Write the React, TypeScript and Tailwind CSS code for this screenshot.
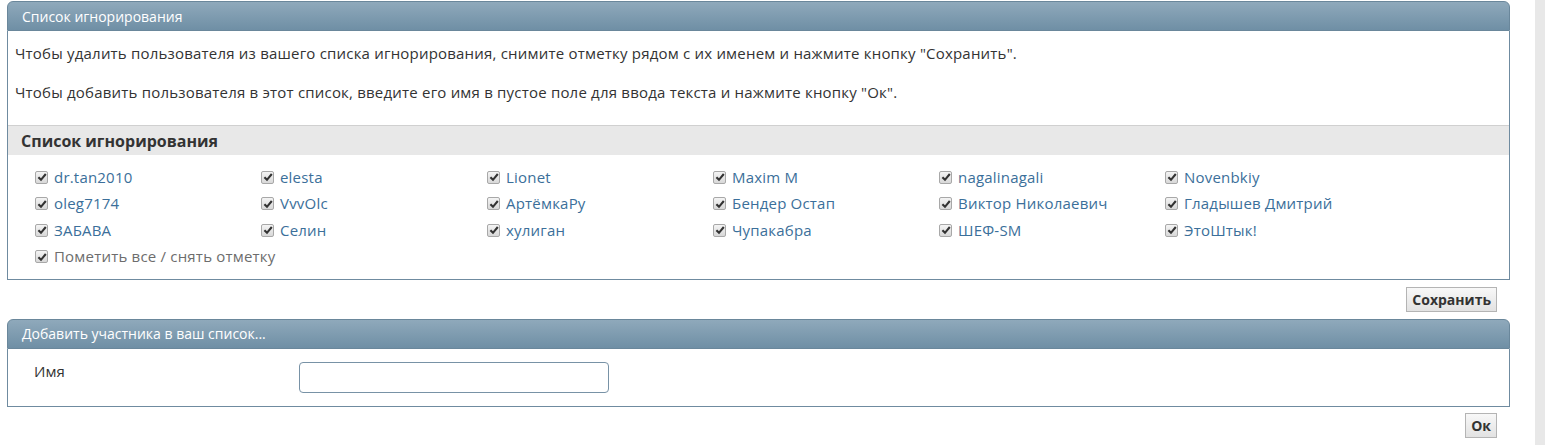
import React from 'react';

const ignored: string[] = [
  'dr.tan2010', 'elesta', 'Lionet', 'Maxim M', 'nagalinagali', 'Novenbkiy',
  'oleg7174', 'VvvOlc', 'АртёмкаРу', 'Бендер Остап', 'Виктор Николаевич', 'Гладышев Дмитрий',
  'ЗАБАВА', 'Селин', 'хулиган', 'Чупакабра', 'ШЕФ-SM', 'ЭтоШтык!',
];

function Check() {
  return (
    <span className="inline-flex w-[13px] h-[13px] shrink-0 items-center justify-center rounded-[2px] border border-[#a8a8a8] bg-gradient-to-b from-[#f4f4f4] to-[#d8d8d8]">
      <svg viewBox="0 0 10 10" className="w-[10px] h-[10px]">
        <path d="M1.4 5.2 L4 7.8 L8.8 2" fill="none" stroke="#333" strokeWidth="2.1" />
      </svg>
    </span>
  );
}

function PanelHead({ children }: { children: React.ReactNode }) {
  return (
    <div className="h-[30px] flex items-center px-[14px] rounded-t-[6px] border border-[#6a879b] bg-gradient-to-b from-[#8fa9bb] to-[#6f8fa5] text-white text-[14px]">
      {children}
    </div>
  );
}

function Button({ children }: { children: React.ReactNode }) {
  return (
    <button className="h-[25px] px-[5px] border border-[#b4b4b4] bg-gradient-to-b from-[#f8f8f8] to-[#e2e2e2] text-[14px] font-bold text-[#333]">
      {children}
    </button>
  );
}

export default function App() {
  return (
    <div className="flex w-[1545px] h-[445px] bg-white font-['Open_Sans',sans-serif] text-[#333]">
      <div className="w-[1528px] pl-[7px] pr-[18px]">
        {/* ignore list */}
        <section className="mt-[1px]">
          <PanelHead>Список игнорирования</PanelHead>
          <div className="border border-t-0 border-[#6f8ba0] text-[15px] tracking-[0.2px]">
            <div className="px-[7px] pt-[12px] pb-[23px] leading-[20px]">
              <p>Чтобы удалить пользователя из вашего списка игнорирования, снимите отметку рядом с их именем и нажмите кнопку "Сохранить".</p>
              <p className="mt-[19px]">Чтобы добавить пользователя в этот список, введите его имя в пустое поле для ввода текста и нажмите кнопку "Ок".</p>
            </div>
            <div className="h-[30px] flex items-center px-[13px] bg-[#e8e8e8] border-t border-[#d0d0d0] text-[16px] tracking-normal font-bold">
              Список игнорирования
            </div>
            <div className="px-[27px] pt-[12px] pb-[12px]">
              <div className="grid grid-cols-[226px_226px_226px_226px_226px_226px] gap-y-[6.5px]">
                {ignored.map((name) => (
                  <label key={name} className="flex items-center gap-[6px] h-[20px] text-[#3b6f9a]">
                    <Check />
                    <span>{name}</span>
                  </label>
                ))}
                <label className="col-span-3 flex items-center gap-[6px] h-[20px] text-[#6d6d6d]">
                  <Check />
                  <span>Пометить все / снять отметку</span>
                </label>
              </div>
            </div>
          </div>
          <div className="flex justify-end pr-[13px] pt-[7px]">
            <Button>Сохранить</Button>
          </div>
        </section>

        {/* add member */}
        <section className="mt-[7px]">
          <PanelHead>Добавить участника в ваш список...</PanelHead>
          <div className="border border-t-0 border-[#6f8ba0] h-[58px] flex items-start text-[15px]">
            <div className="w-[291px] pl-[26px] pt-[11px]">Имя</div>
            <input className="mt-[13px] w-[310px] h-[31px] rounded-[4px] border border-[#7892a6] outline-none" />
          </div>
          <div className="flex justify-end pr-[13px] pt-[6px]">
            <Button>Ок</Button>
          </div>
        </section>
      </div>
      <div className="ml-auto w-[10px] h-full bg-[#e8e8e8]" />
    </div>
  );
}
